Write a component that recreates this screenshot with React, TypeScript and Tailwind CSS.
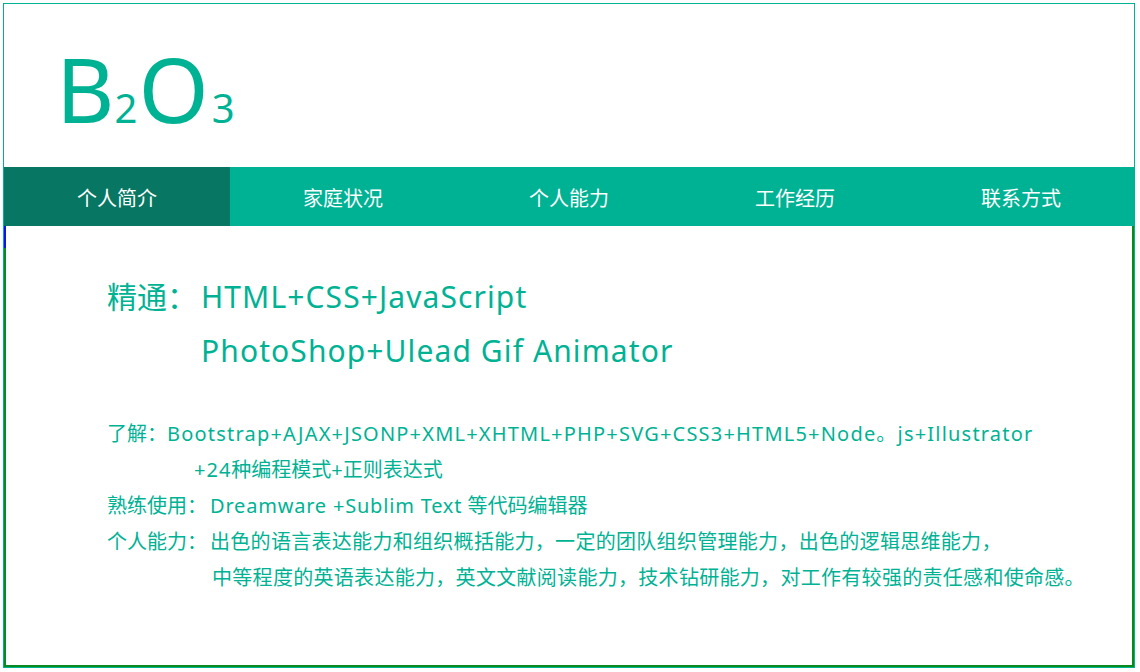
import { FC } from 'react';

const tabs = ['个人简介', '家庭状况', '个人能力', '工作经历', '联系方式'];

const font = { fontFamily: '"Noto Sans", "Noto Sans CJK SC", sans-serif' };

const App: FC = (): JSX.Element => {
  return (
    <div className="h-[672px] w-[1140px] bg-white pl-[3px] pt-[3px]" style={font}>
      <div className="w-[1132px] border border-[#00b294]">
        {/* header */}
        <div className="flex h-[163px] items-start pl-[52px] pt-[39px] text-[#00b294]">
          <div className="flex items-baseline leading-none">
            <span className="text-[90px]">B</span>
            <span className="mr-[1px] text-[40px]">2</span>
            <span className="text-[90px]">O</span>
            <span className="ml-[3px] text-[40px]">3</span>
          </div>
        </div>
        {/* nav */}
        <div className="grid h-[59px] grid-cols-5 bg-[#00b294]">
          {tabs.map((item, index) => {
            return (
              <div
                key={index}
                className={`flex items-center justify-center pt-[4px] text-[20px] text-white ${
                  index === 0 ? 'bg-[#077763]' : ''
                }`}
              >
                {item}
              </div>
            );
          })}
        </div>
        {/* content */}
        <div className="relative h-[441px] border-x-2 border-b-2 border-[#0a8a1e] pl-[101px] pt-[44px] text-[#00b294]">
          <span className="absolute -left-[2px] top-0 h-[22px] w-[2px] bg-[#1010f0]" />
          <div className="flex text-[30px] leading-[54px]">
            <span className="w-[94px] shrink-0">精通：</span>
            <div className="tracking-[1.1px]">
              <p>HTML+CSS+JavaScript</p>
              <p>PhotoShop+Ulead Gif Animator</p>
            </div>
          </div>
          <div className="mt-[38px] text-[20px] leading-[36px]">
            <p>
              了解：
              <span className="tracking-[1.2px]">
                Bootstrap+AJAX+JSONP+XML+XHTML+PHP+SVG+CSS3+HTML5+Node。js+Illustrator
              </span>
            </p>
            <p className="pl-[87px]">
              <span className="tracking-[1px]">+24</span>种编程模式+正则表达式
            </p>
            <div className="flex">
              <span className="w-[103px] shrink-0">熟练使用：</span>
              <p>
                <span className="tracking-[0.8px]">Dreamware +Sublim Text</span> 等代码编辑器
              </p>
            </div>
            <div className="flex">
              <span className="w-[103px] shrink-0">个人能力：</span>
              <div className="tracking-[0.3px]">
                <p>出色的语言表达能力和组织概括能力，一定的团队组织管理能力，出色的逻辑思维能力，</p>
                <p className="pl-[2px]">中等程度的英语表达能力，英文文献阅读能力，技术钻研能力，对工作有较强的责任感和使命感。</p>
              </div>
            </div>
          </div>
        </div>
      </div>
    </div>
  );
};

export default App;
